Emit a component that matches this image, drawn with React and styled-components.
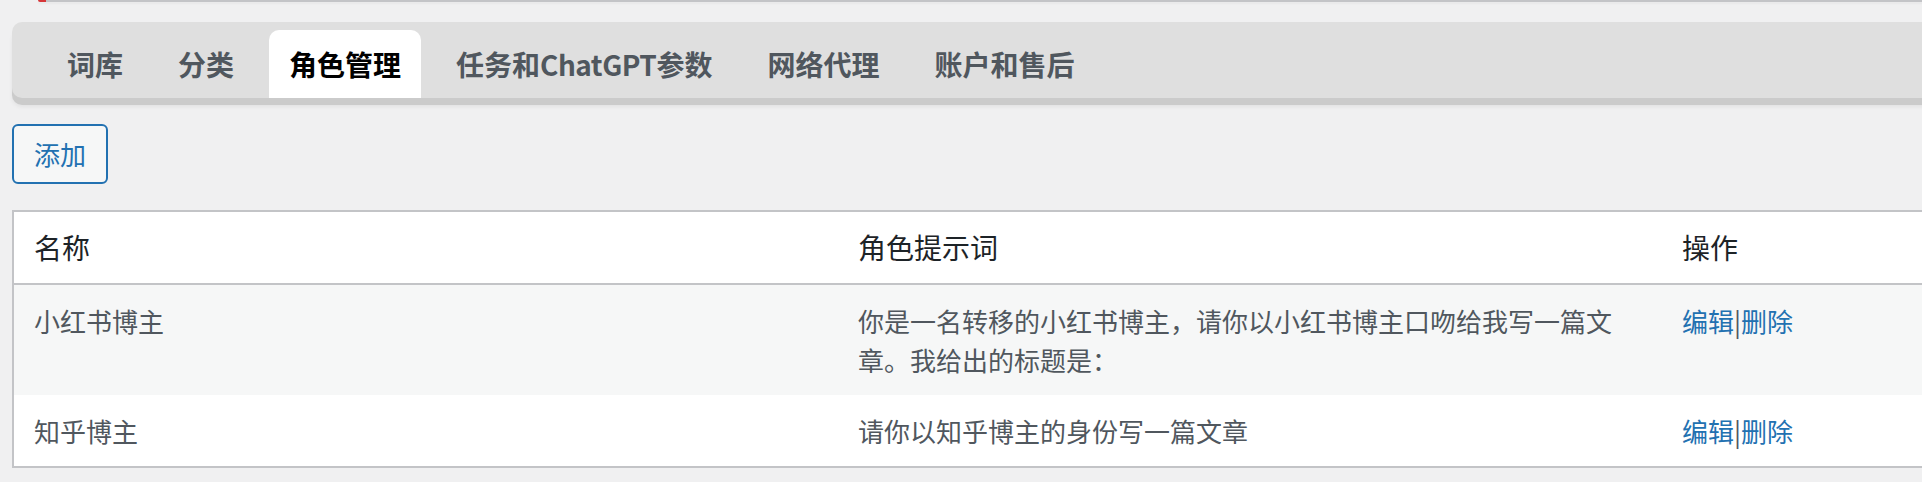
import styled, { createGlobalStyle } from "styled-components";

const GlobalStyle = createGlobalStyle`
    html, body {
        margin: 0;
        padding: 0;
        background: #f0f0f1;
        overflow: hidden;
    }
    body {
        font-family: "Noto Sans CJK SC", "Noto Sans", sans-serif;
        color: #3c434a;
    }
`

const Page = styled.div`
    width: 1922px;
    padding: 0 0 0 12px;
    box-sizing: border-box;
`
const Notice = styled.div`
    height: 2px;
    margin-left: 26px;
    margin-right: -40px;
    background: #c3c4c7;
    border-left: 8px solid #d63638;
    border-bottom-left-radius: 2px;
    box-shadow: 0 2px 2px rgba(0, 0, 0, 0.04);
`
const TabBar = styled.nav`
    margin-top: 20px;
    margin-right: -40px;
    height: 76px;
    padding: 8px 0 0 35px;
    box-sizing: border-box;
    display: flex;
    align-items: flex-end;
    gap: 15px;
    background: #dfdfdf;
    border-radius: 10px 0 0 10px;
    box-shadow: 0 7px 0 #cbcbcb, 0 9px 4px rgba(0, 0, 0, 0.06);
`
const Tab = styled.a`
    display: block;
    padding: 10px 20px;
    font-size: 28px;
    line-height: 48px;
    font-weight: 700;
    white-space: nowrap;
    text-decoration: none;
    color: ${(props) => (props.$active ? "#000" : "#50575e")};
    background: ${(props) => (props.$active ? "#fff" : "transparent")};
    border-radius: 10px 10px 0 0;
`
const Latin = styled.span`
    letter-spacing: -0.5px;
`
const Toolbar = styled.div`
    margin-top: 26px;
    display: flex;
`
const Button = styled.button`
    height: 60px;
    padding: 0 20px;
    font-family: inherit;
    font-size: 26px;
    line-height: 56px;
    color: #2271b1;
    background: #f6f7f7;
    border: 2px solid #2271b1;
    border-radius: 6px;
    cursor: pointer;
`
const Table = styled.table`
    margin-top: 26px;
    width: calc(100% + 40px);
    border-collapse: collapse;
    table-layout: fixed;
    background: #fff;
    border: 2px solid #c3c4c7;
    border-right: none;
`
const Th = styled.th`
    text-align: left;
    font-weight: 400;
    font-size: 28px;
    line-height: 39px;
    color: #1d2327;
    padding: 16px 20px;
    border-bottom: 2px solid #c3c4c7;
`
const Row = styled.tr`
    background: ${(props) => (props.$striped ? "#f6f7f7" : "#fff")};
`
const Td = styled.td`
    vertical-align: top;
    font-size: 26px;
    line-height: 39px;
    color: #50575e;
    padding: 16px 20px;
`
const Link = styled.a`
    color: #2271b1;
    text-decoration: none;
`
const Sep = styled.span`
    color: #50575e;
`

const tabs = [
    { key: "words", label: "词库" },
    { key: "cats", label: "分类" },
    { key: "roles", label: "角色管理" },
    { key: "task", label: <>任务和<Latin>ChatGPT</Latin>参数</> },
    { key: "proxy", label: "网络代理" },
    { key: "account", label: "账户和售后" },
];

const roles = [
    { name: "小红书博主", prompt: "你是一名转移的小红书博主，请你以小红书博主口吻给我写一篇文章。我给出的标题是：" },
    { name: "知乎博主", prompt: "请你以知乎博主的身份写一篇文章" },
];

export default function App() {
    return <>
        <GlobalStyle />
        <Page>
            <Notice />
            <TabBar>
                {tabs.map((t) => (
                    <Tab key={t.key} $active={t.key === "roles"}>{t.label}</Tab>
                ))}
            </TabBar>
            <Toolbar>
                <Button>添加</Button>
            </Toolbar>
            <Table>
                <colgroup>
                    <col style={{ width: "825px" }} />
                    <col style={{ width: "824px" }} />
                    <col />
                </colgroup>
                <thead>
                    <tr>
                        <Th>名称</Th>
                        <Th>角色提示词</Th>
                        <Th>操作</Th>
                    </tr>
                </thead>
                <tbody>
                    {roles.map((r, i) => (
                        <Row key={r.name} $striped={i % 2 === 0}>
                            <Td>{r.name}</Td>
                            <Td>{r.prompt}</Td>
                            <Td>
                                <Link>编辑</Link><Sep>|</Sep><Link>删除</Link>
                            </Td>
                        </Row>
                    ))}
                </tbody>
            </Table>
        </Page>
    </>;
}
